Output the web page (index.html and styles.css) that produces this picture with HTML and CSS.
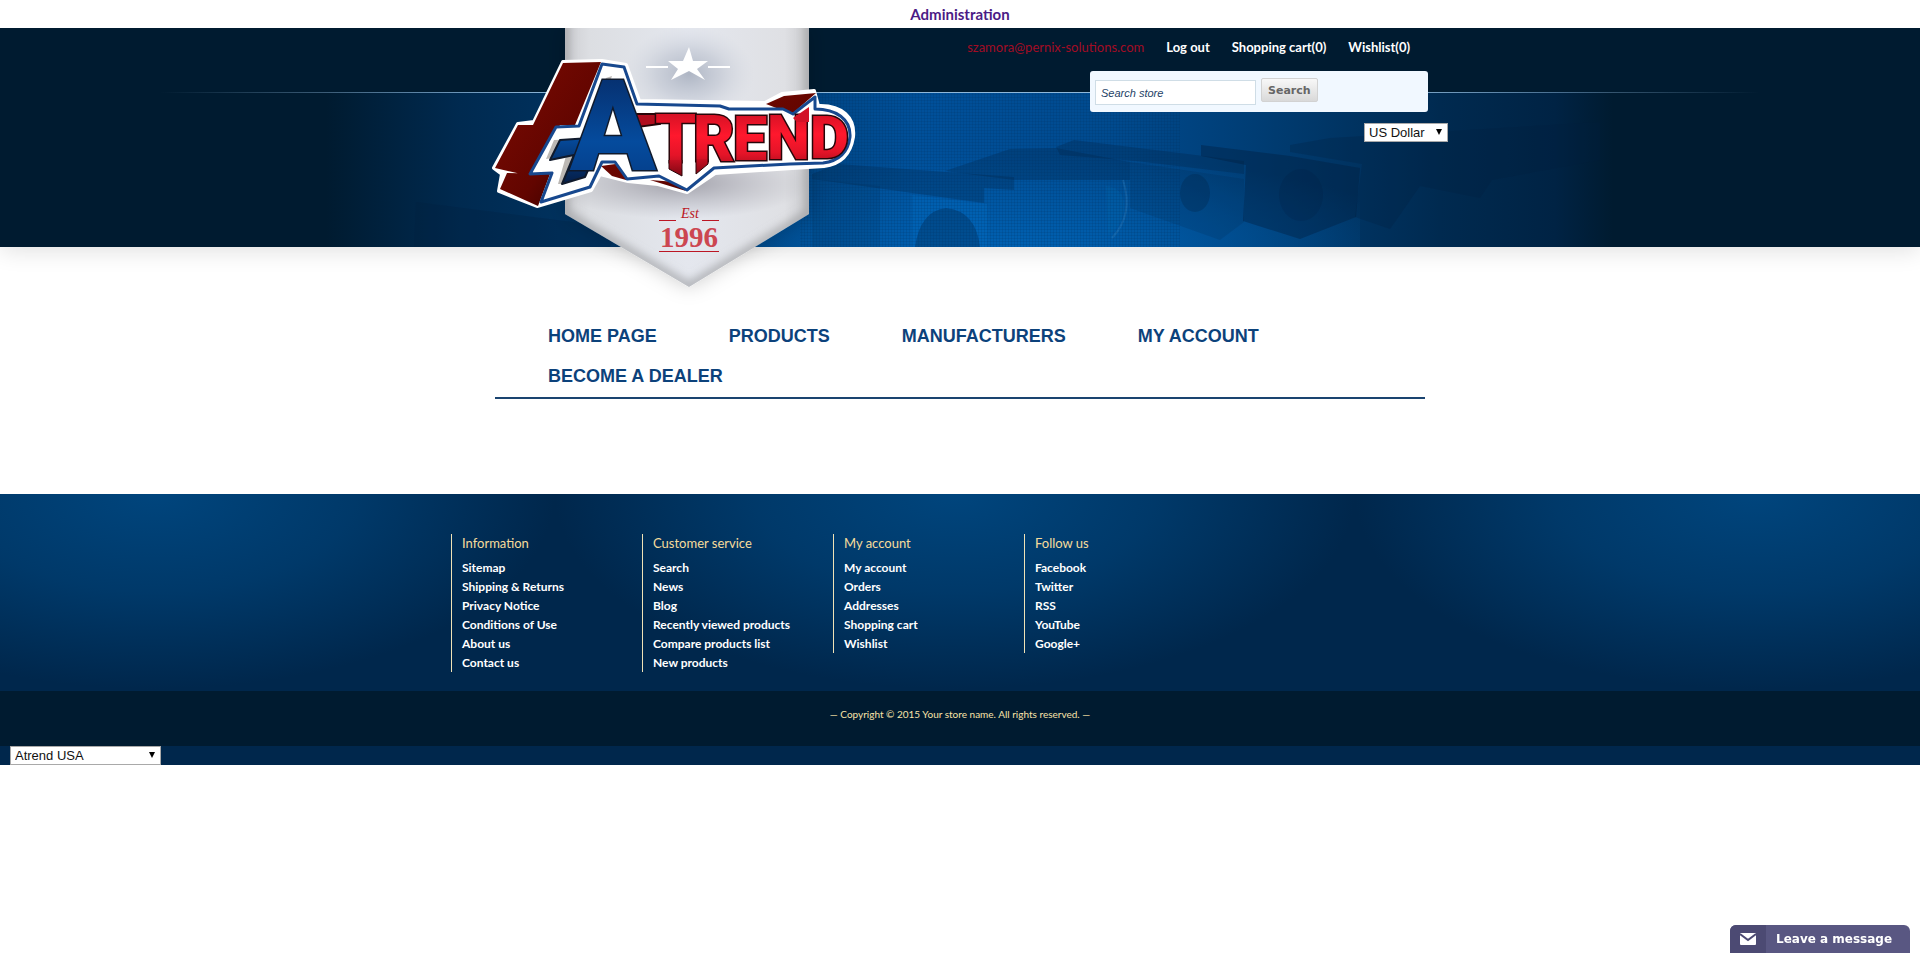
FILE: index.html
```html
<!DOCTYPE html>
<html lang="en">
<head>
<meta charset="utf-8">
<title>Atrend USA</title>
<link rel="stylesheet" href="styles.css">
</head>
<body>
<div class="admin-bar"><a href="#">Administration</a></div>
<header class="header">
  <svg class="header-art" viewBox="0 0 1920 219" preserveAspectRatio="xMidYMin slice" aria-hidden="true">
    <defs>
      <linearGradient id="band" x1="0" x2="1">
        <stop offset="0" stop-color="#001b30"/><stop offset=".17" stop-color="#001b30"/><stop offset=".24" stop-color="#002a50"/><stop offset=".38" stop-color="#003d74"/><stop offset=".48" stop-color="#00509a"/><stop offset=".58" stop-color="#004a8e"/><stop offset=".67" stop-color="#003a6e"/><stop offset=".75" stop-color="#002a50"/><stop offset=".81" stop-color="#002344"/><stop offset=".84" stop-color="#001b30"/><stop offset="1" stop-color="#001b30"/>
      </linearGradient>
      <linearGradient id="hair" x1="0" x2="1">
        <stop offset="0" stop-color="#8fb8da" stop-opacity="0"/><stop offset=".25" stop-color="#8fb8da"/><stop offset=".75" stop-color="#8fb8da"/><stop offset="1" stop-color="#8fb8da" stop-opacity="0"/>
      </linearGradient>
      <radialGradient id="glow" cx=".5" cy="1" r=".6">
        <stop offset="0" stop-color="#0065b8" stop-opacity=".8"/><stop offset="1" stop-color="#0065b8" stop-opacity="0"/>
      </radialGradient>
      <pattern id="mesh" width="3" height="3" patternUnits="userSpaceOnUse"><path d="M0 0H3M0 0V3" stroke="#002a5c" stroke-opacity=".3"/></pattern>
    </defs>
    <rect width="1920" height="219" fill="#001b30"/>
    <rect y="64" width="1920" height="155" fill="url(#band)"/>
    <rect x="680" y="64" width="680" height="155" fill="url(#glow)"/>
    <g fill="#001d3c" fill-opacity=".26">
      <path d="M416 174 620 200 610 219 414 219Z"/>
      <path d="M812 146 838 136 1014 149 1014 162 984 160 984 175 812 151Z"/>
      <path d="M945 143 1010 121 1056 120 1130 134 1130 152 1014 152Z"/>
      <path d="M1130 134 1244 151 1244 194 1220 212 1130 180Z" fill-opacity=".14"/>
      <path d="M1056 119 1074 112 1244 133 1244 146 1136 133 1060 127Z"/>
      <path d="M1201 117 1290 128 1360 140 1356 189 1300 211 1243 193 1246 137 1201 128Z" fill-opacity=".38"/>
      <path d="M1290 117 1330 110 1600 94 1600 132 1492 152 1480 170 1420 158 1395 194 1390 201 1355 189 1362 136 1290 124Z"/>
      <ellipse cx="1195" cy="165" rx="15" ry="19"/><ellipse cx="1301" cy="167" rx="22" ry="26" fill-opacity=".18"/>
      <path d="M915 219Q920 183 946 180 976 183 980 219Z"/>
      <path d="M812 151 880 158 880 219 812 219Z" fill-opacity=".12"/>
    </g>
    <path d="M912 167 987 176V219H980Q976 183 946 180 920 183 915 219H912Z" fill="#0068bd" fill-opacity=".45"/>
    <path d="M1123 152Q1134 187 1112 210" fill="none" stroke="#2c7dbc" stroke-width="2" stroke-opacity=".4"/>
    <path d="M1106 158Q1126 160 1124 182 1120 202 1108 206Z" fill="#0068ad" fill-opacity=".3"/>
    <rect x="800" y="64" width="380" height="155" fill="url(#mesh)"/>
    <rect x="160" y="64" width="1600" height="1" fill="url(#hair)"/>
  </svg>
  <div class="header-inner">
    <a class="logo" href="#" aria-label="Atrend">
      <svg viewBox="480 20 400 280" width="400" height="280" role="img" aria-label="Atrend, established 1996">
        <defs>
          <linearGradient id="cloth" x1="0" x2="1"><stop offset="0" stop-color="#cdced2"/><stop offset=".1" stop-color="#dcdee2"/><stop offset=".5" stop-color="#e4e7ee"/><stop offset=".9" stop-color="#dfe0e4"/><stop offset="1" stop-color="#c9cacd"/></linearGradient>
          <linearGradient id="red" x1="0" x2="0" y1="0" y2="1"><stop offset="0" stop-color="#c00d20"/><stop offset=".45" stop-color="#ff182d"/><stop offset=".7" stop-color="#e51428"/><stop offset="1" stop-color="#8d0916"/></linearGradient>
          <linearGradient id="point" x1="0" x2="0" y1="0" y2="1"><stop offset="0" stop-color="#c81023"/><stop offset="1" stop-color="#7d0712"/></linearGradient>
          <linearGradient id="blue" x1="0" x2="0" y1="0" y2="1"><stop offset="0" stop-color="#06265f"/><stop offset=".6" stop-color="#054b9d"/><stop offset="1" stop-color="#05377e"/></linearGradient>
          <linearGradient id="tail" x1="0" x2="0" y1="0" y2="1"><stop offset="0" stop-color="#054b9d"/><stop offset="1" stop-color="#051d46"/></linearGradient>
          <linearGradient id="maroon" x1="0" x2="1" y1="0" y2="1"><stop offset="0" stop-color="#7e0b02"/><stop offset=".6" stop-color="#620500"/><stop offset="1" stop-color="#230000"/></linearGradient>
          <radialGradient id="smoke"><stop offset="0" stop-color="#8b95a8" stop-opacity=".6"/><stop offset=".5" stop-color="#9aa3b5" stop-opacity=".3"/><stop offset="1" stop-color="#c4cad6" stop-opacity="0"/></radialGradient>
          <radialGradient id="shade"><stop offset="0" stop-color="#74717c" stop-opacity=".6"/><stop offset="1" stop-color="#8d8b95" stop-opacity="0"/></radialGradient>
          <filter id="drop" x="-20%" y="-20%" width="140%" height="140%"><feDropShadow dx="0" dy="0" stdDeviation="10" flood-color="#001028" flood-opacity=".2"/></filter>
          <filter id="soft"><feGaussianBlur stdDeviation="5"/></filter>
          <clipPath id="flag"><path d="M565 28H809V214L689 287 565 214Z"/></clipPath>
        </defs>
        <path d="M565 28H809V214L689 287 565 214Z" fill="url(#cloth)" filter="url(#drop)"/>
        <g clip-path="url(#flag)">
          <path d="M565 20V214L689 287 809 214V20" fill="none" stroke="#8e9093" stroke-width="8" stroke-opacity=".7" filter="url(#soft)"/>
          <ellipse cx="689" cy="74" rx="65" ry="48" fill="url(#smoke)"/>
          <ellipse cx="680" cy="183" rx="130" ry="36" fill="url(#shade)"/>
        </g>
        <path d="M689 47 693 61H708L697 69 705 80 689 71 671 80 678 69 668 61H683ZM646 66H668V68H646ZM708 66H730V68H708Z" fill="#fff"/>
        <path d="M563 62 602 61 626 65 639 101 765 103 782 94 814 91 818 106C842 105 855 118 853 137 850 156 840 164 824 166L792 168 715 173 687 192 658 184 628 181 600 174 591 190 537 206 499 191 502 174 494 168 518 124 534 122Z" fill="#fff" stroke="#fff" stroke-width="4" stroke-linejoin="round"/>
        <path d="M563 63 601 62 575 125 533 125ZM518 125 560 125 530 176 495 168ZM507 173 550 174 538 206 500 189Z" fill="url(#maroon)"/>
        <path d="M766 104 784 96 816 93 792 114ZM601 166 630 162 626 180 612 176ZM650 180 676 182 686 191Z" fill="url(#maroon)"/>
        <path d="M602 64 624 67 637 104 720 106 729 109 783 109 793 114 815 97 815 109C836 109 851 119 850 137 848 153 838 161 823 163L790 164 714 168 687 190 659 176 627 179 615 162 602 162 590 187 541 202 552 173 530 174 556 127 579 126Z" fill="#fff" stroke="#17488e" stroke-width="3" stroke-linejoin="round"/>
        <path d="M606 78 580 139 554 140 546 159 566 156 558 184 565 184 574 156 552 158 560 143 590 139 612 76Z" fill="#bcb8b4"/>
        <path d="M590 138 560 140 550 160 574 155 562 184 585 177 596 152Z" fill="url(#tail)" stroke="#101a2c" stroke-width="2" stroke-linejoin="round"/>
        <path d="M634 114 660 114 660 124 638 127Z" fill="#b00d1e" stroke="#280509" stroke-width="2"/>
        <g class="mark" fill="url(#red)" stroke="#280509" stroke-width="3" paint-order="stroke">
          <text x="655" y="162" font-size="66">T</text>
          <text x="693" y="161" font-size="64">R</text>
          <text x="733" y="160" font-size="61">E</text>
          <text x="767" y="159" font-size="61">N</text>
          <text x="810" y="158" font-size="60">D</text>
        </g>
        <path d="M669 160V169L682 176V160M696 159V174L708 164V159" fill="url(#point)" stroke="#280509" stroke-width="1"/>
        <path d="M793 118 809 107V122H797Z" fill="#d21226"/>
        <text class="mark" x="570" y="170" font-size="126" fill="url(#blue)" stroke="#101a2c" stroke-width="3" paint-order="stroke">A</text>
        <path d="M659 220.500H676M702 220.500H719M659 251.500H719" stroke="#bb1624"/>
        <text class="est" x="690" y="218" font-size="14">Est</text>
        <text class="year" x="689" y="247" font-size="29">1996</text>
      </svg>
    </a>
    <div class="tools">
      <ul class="account">
        <li><a class="mail" href="#">szamora@pernix-solutions.com</a></li>
        <li><a href="#">Log out</a></li>
        <li><a href="#">Shopping cart(0)</a></li>
        <li><a href="#">Wishlist(0)</a></li>
      </ul>
      <form class="search">
        <input type="text" value="Search store" aria-label="Search store">
        <button type="button">Search</button>
      </form>
      <span class="pick currency"><select aria-label="Currency"><option>US Dollar</option></select></span>
    </div>
  </div>
</header>
<nav class="menu">
  <a href="#">HOME PAGE</a><a href="#">PRODUCTS</a><a href="#">MANUFACTURERS</a><a href="#">MY ACCOUNT</a><a href="#">BECOME A DEALER</a>
</nav>
<footer class="footer">
  <div class="columns">
    <section><h2>Information</h2><ul><li><a href="#">Sitemap</a></li><li><a href="#">Shipping &amp; Returns</a></li><li><a href="#">Privacy Notice</a></li><li><a href="#">Conditions of Use</a></li><li><a href="#">About us</a></li><li><a href="#">Contact us</a></li></ul></section>
    <section><h2>Customer service</h2><ul><li><a href="#">Search</a></li><li><a href="#">News</a></li><li><a href="#">Blog</a></li><li><a href="#">Recently viewed products</a></li><li><a href="#">Compare products list</a></li><li><a href="#">New products</a></li></ul></section>
    <section><h2>My account</h2><ul><li><a href="#">My account</a></li><li><a href="#">Orders</a></li><li><a href="#">Addresses</a></li><li><a href="#">Shopping cart</a></li><li><a href="#">Wishlist</a></li></ul></section>
    <section><h2>Follow us</h2><ul><li><a href="#">Facebook</a></li><li><a href="#">Twitter</a></li><li><a href="#">RSS</a></li><li><a href="#">YouTube</a></li><li><a href="#">Google+</a></li></ul></section>
  </div>
  <p class="copyright">— Copyright © 2015 Your store name. All rights reserved. —</p>
  <div class="store"><span class="pick"><select aria-label="Store"><option>Atrend USA</option></select></span></div>
</footer>
<button class="chat" type="button">
  <span class="chat-icon"><svg width="16" height="12" viewBox="0 0 16 12" aria-hidden="true"><rect width="16" height="12" rx="1" fill="#fff"/><path d="M0 1 8 7 16 1" fill="none" stroke="#4c4a73" stroke-width="2"/></svg></span>
  <span class="chat-label">Leave a message</span>
</button>
</body>
</html>
```
FILE: styles.css
```css
* { box-sizing: border-box; }
body { margin: 0; background: #fff; font-family: Lato, "Liberation Sans", sans-serif; font-size: 14px; }
a { color: inherit; text-decoration: none; }
ul { list-style: none; margin: 0; padding: 0; }

.admin-bar { position: relative; z-index: 1; padding: 4px 0; background: #fff; font-size: 15px; line-height: 20px; text-align: center; font-weight: 700; color: #4b1b85; }

.header { position: relative; height: 219px; background: #001b30; box-shadow: 0 4px 22px rgba(0, 0, 0, .12); }
.header-art { position: absolute; top: 0; left: 0; width: 100%; height: 100%; }
.header-inner { position: relative; width: 960px; max-width: 100%; margin: 0 auto; display: flex; justify-content: space-between; align-items: flex-start; }
.logo { display: block; flex: none; margin-top: -8px; }
.logo svg { display: block; overflow: visible; }
.mark { font-family: Roboto, sans-serif; font-weight: 900; }
.est { font-family: "Liberation Serif", serif; font-style: italic; fill: #bb1624; text-anchor: middle; }
.year { font-family: "Liberation Serif", serif; font-weight: 700; fill: #cc4650; text-anchor: middle; }

.tools { display: flex; flex-direction: column; align-items: flex-end; padding-top: 9px; margin-right: -8px; }
.account { display: flex; gap: 22px; padding-right: 38px; color: #fff; line-height: 20px; font-weight: 700; font-size: 13px; }
.account .mail { color: #a30c24; font-weight: 400; }
.search { display: flex; align-items: flex-start; gap: 5px; width: 338px; height: 41px; margin: 14px 20px 11px 0; padding: 7px 5px; border-radius: 3px; background: #f1f8ff; }
.search input { width: 161px; height: 25px; margin: 2px 0 0; padding: 0 5px; border: 1px solid #cfdde6; background: #fff; color: #243f66; font: italic 11px "Liberation Sans", sans-serif; }
.search button { height: 24px; padding: 0 6px; border: 1px solid #d2d2d2; border-radius: 2px; background: linear-gradient(#f8f8f8, #d9d9d9); color: #666; font: 700 11px "DejaVu Sans", sans-serif; }

.pick { position: relative; display: block; }
.pick::after { content: ""; position: absolute; right: 6px; top: 6px; border: 3px solid transparent; border-top: 6px solid #000; border-bottom: 0; }
.pick select { display: block; width: 100%; height: 19px; padding: 0 4px; border: 1px solid #a9a9a9; border-radius: 0; background: #fff; color: #111; font: 13px "Liberation Sans", sans-serif; appearance: none; }
.currency { width: 84px; }

.menu { display: flex; flex-wrap: wrap; column-gap: 72px; width: 930px; max-width: 100%; margin: 69px auto 95px; padding: 0 53px 1px; border-bottom: 2px solid #1a4470; color: #0c427b; font: 700 18px/40px "Liberation Sans", sans-serif; }

.footer { background: radial-gradient(ellipse 400px 195px at 155px 0, #00457d, rgba(0, 69, 125, .6) 50%, transparent), radial-gradient(ellipse 400px 195px at 955px 0, #00457d, rgba(0, 69, 125, .6) 50%, transparent), radial-gradient(ellipse 400px 195px at 1755px 0, #00457d, rgba(0, 69, 125, .6) 50%, transparent), #00274c; }
.columns { display: flex; width: 1018px; max-width: 100%; margin: 0 auto; padding: 40px 0 19px; align-items: flex-start; }
.columns section { width: 191px; padding: 0 0 0 10px; border-left: 1px solid #f0e2b6; color: #fff; font-weight: 700; font-size: 12px; line-height: 19px; }
.columns h2 { margin: 0 0 5px; color: #f6dc9c; font-size: 13px; font-weight: 400; line-height: 19px; }
.copyright { margin: 0; padding: 14px 0 22px; background: #001b30; color: #f9e3a9; text-align: center; font-size: 10px; line-height: 19px; }
.store { padding-left: 10px; }
.store .pick { width: 151px; }

.chat { position: fixed; right: 10px; bottom: 0; display: flex; width: 180px; height: 28px; padding: 0; border: 0; border-radius: 6px 6px 0 0; overflow: hidden; background: #595782; color: #fff; font: 700 12px "DejaVu Sans", sans-serif; }
.chat-icon { display: flex; align-items: center; justify-content: center; width: 36px; height: 100%; background: #4c4a73; }
.chat-label { flex: 1; padding-left: 10px; text-align: left; line-height: 28px; }
```
